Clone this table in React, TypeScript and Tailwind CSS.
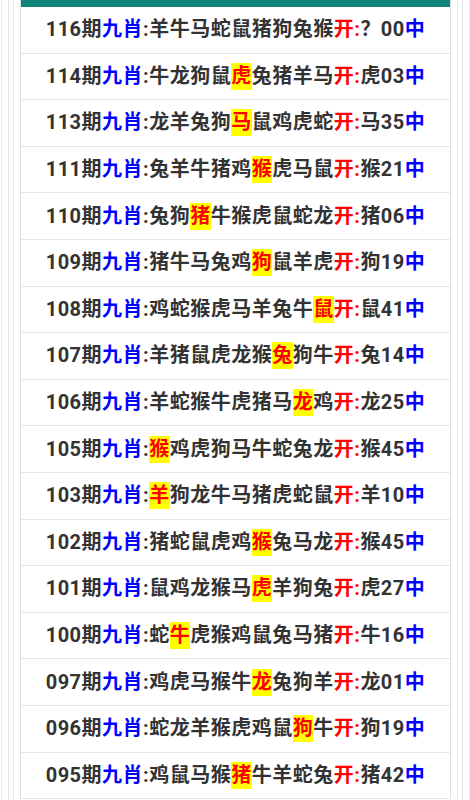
const rows: { no: string; list: string; hit: string; res: string }[] = [
  { no: "116", list: "羊牛马蛇鼠猪狗兔猴", hit: "", res: "？00" },
  { no: "114", list: "牛龙狗鼠虎兔猪羊马", hit: "虎", res: "虎03" },
  { no: "113", list: "龙羊兔狗马鼠鸡虎蛇", hit: "马", res: "马35" },
  { no: "111", list: "兔羊牛猪鸡猴虎马鼠", hit: "猴", res: "猴21" },
  { no: "110", list: "兔狗猪牛猴虎鼠蛇龙", hit: "猪", res: "猪06" },
  { no: "109", list: "猪牛马兔鸡狗鼠羊虎", hit: "狗", res: "狗19" },
  { no: "108", list: "鸡蛇猴虎马羊兔牛鼠", hit: "鼠", res: "鼠41" },
  { no: "107", list: "羊猪鼠虎龙猴兔狗牛", hit: "兔", res: "兔14" },
  { no: "106", list: "羊蛇猴牛虎猪马龙鸡", hit: "龙", res: "龙25" },
  { no: "105", list: "猴鸡虎狗马牛蛇兔龙", hit: "猴", res: "猴45" },
  { no: "103", list: "羊狗龙牛马猪虎蛇鼠", hit: "羊", res: "羊10" },
  { no: "102", list: "猪蛇鼠虎鸡猴兔马龙", hit: "猴", res: "猴45" },
  { no: "101", list: "鼠鸡龙猴马虎羊狗兔", hit: "虎", res: "虎27" },
  { no: "100", list: "蛇牛虎猴鸡鼠兔马猪", hit: "牛", res: "牛16" },
  { no: "097", list: "鸡虎马猴牛龙兔狗羊", hit: "龙", res: "龙01" },
  { no: "096", list: "蛇龙羊猴虎鸡鼠狗牛", hit: "狗", res: "狗19" },
  { no: "095", list: "鸡鼠马猴猪牛羊蛇兔", hit: "猪", res: "猪42" },
];

function Row({ no, list, hit, res }: (typeof rows)[number]) {
  return (
    <div className="h-[46.6px] flex items-center justify-center border-b border-[#e6e6e6] bg-white">
      <p className="text-[20px] font-bold text-[#333] whitespace-nowrap leading-[27px] tracking-[0.5px]">
        {no}期<span className="text-[#0000ff]">九肖</span>:
        {list.split("").map((c, i) =>
          c === hit ? (
            <span key={i} className="inline-block bg-[#ffff00] text-[#ff0000] h-[27px]">{c}</span>
          ) : (
            <span key={i}>{c}</span>
          )
        )}
        <span className="text-[#ff0000]">开:</span>
        {res}
        <span className="text-[#0000ff]">中</span>
      </p>
    </div>
  );
}

export default function App() {
  return (
    <div className="min-h-screen bg-white pl-[1px]" style={{ fontFamily: "Roboto, 'Noto Sans CJK SC', sans-serif" }}>
      <div className="min-h-screen border-x border-[#ececec] px-[6px]">
        <div className="min-h-screen border-x border-[#e4e4e4] px-[4px]">
          <div className="min-h-screen border-x border-[#ededed] px-[6px]">
            <div className="border-x border-[#dedede]">
              <div className="h-[7px] bg-[#10857b]" />
              {rows.map((r) => (
                <Row key={r.no} {...r} />
              ))}
            </div>
          </div>
        </div>
      </div>
    </div>
  );
}
